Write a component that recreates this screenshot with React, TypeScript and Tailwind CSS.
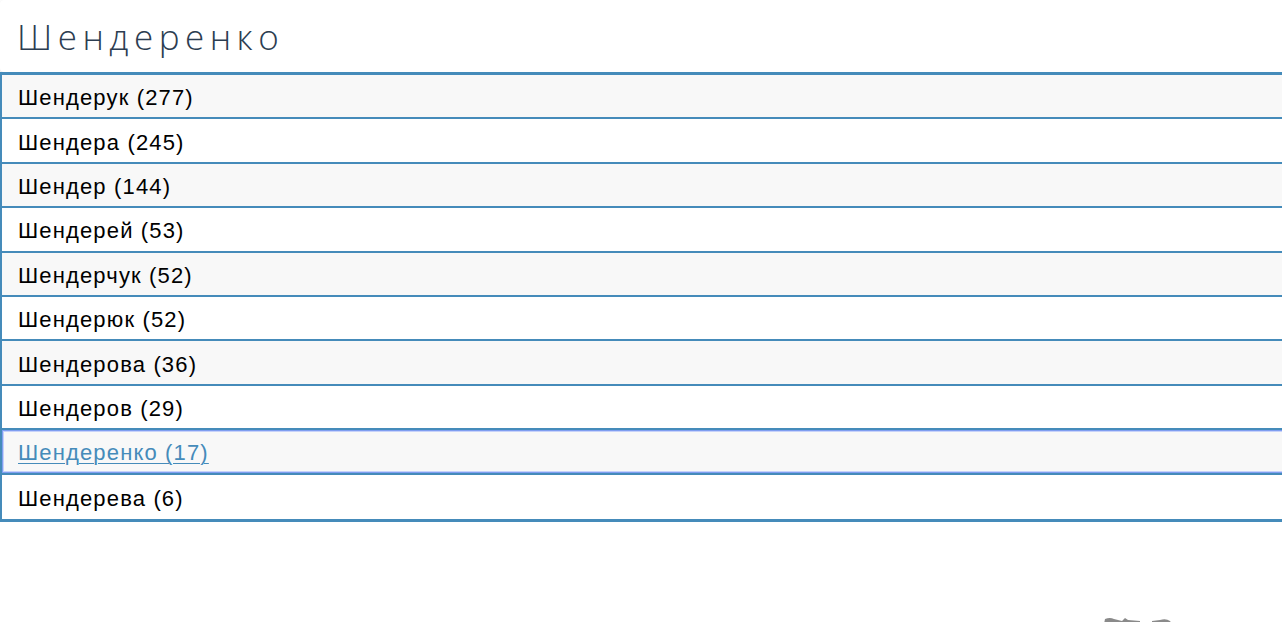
const names = [
  { label: 'Шендерук (277)' },
  { label: 'Шендера (245)' },
  { label: 'Шендер (144)' },
  { label: 'Шендерей (53)' },
  { label: 'Шендерчук (52)' },
  { label: 'Шендерюк (52)' },
  { label: 'Шендерова (36)' },
  { label: 'Шендеров (29)' },
  { label: 'Шендеренко (17)', active: true },
  { label: 'Шендерева (6)' },
];

export default function App() {
  return (
    <div className="relative h-[622px] w-[1282px] overflow-hidden bg-white">
      <div className="flex h-[72px] items-center rounded-l-[4px] bg-white pl-[17px] shadow-[0_1px_3px_rgba(0,0,0,0.12)]">
        <span className="font-['Open_Sans',sans-serif] text-[35px] font-light tracking-[5.5px] text-[#2c3d51] mt-[2px]">
          Шендеренко
        </span>
      </div>
      <ul className="w-[1290px] border-t-[3px] border-l-2 border-b-[3px] border-[#458bba] font-['Liberation_Sans',Arial,sans-serif] text-[22px] tracking-[1.15px]">
        {names.map((n, i) => (
          <li
            key={n.label}
            className={
              'flex h-[44.4px] items-center pl-[16px] pt-[3px] ' +
              (i < names.length - 1 ? 'border-b-2 border-[#458bba] ' : '') +
              (i % 2 === 0 ? 'bg-[#f8f8f8] ' : 'bg-white ') +
              (n.active ? 'shadow-[inset_0_0_0_1px_#7f9ef0,inset_0_0_0_2px_#c7d2fa] ' : '')
            }
          >
            {n.active ? (
              <a href="#" className="text-[#458bba] underline underline-offset-[3px] decoration-1">
                {n.label}
              </a>
            ) : (
              <span className="text-black">{n.label}</span>
            )}
          </li>
        ))}
      </ul>
      <svg className="absolute left-[1100px] top-[614px]" width="80" height="10" viewBox="0 0 80 10">
        <path d="M4 10 L5 5 Q10 3 14 5 L22 7 L25 4 L28 6 L40 7 L40 10 Z" fill="#8a8a8a" />
        <path d="M52 10 L52 7 L60 6 Q66 4 70 7 L72 10 Z" fill="#8a8a8a" />
      </svg>
    </div>
  );
}
